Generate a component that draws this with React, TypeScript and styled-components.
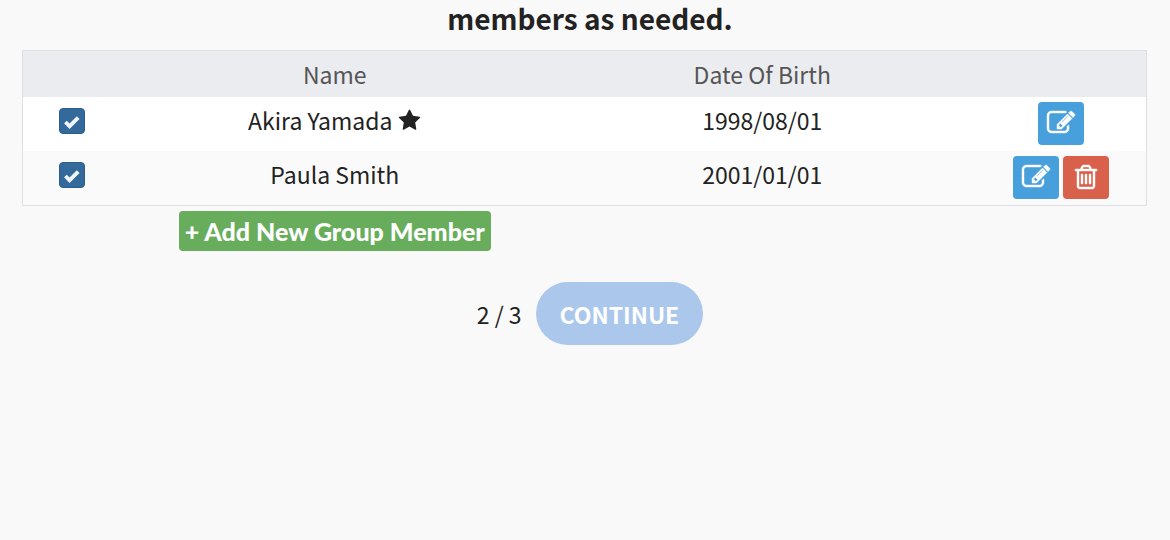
import React from 'react';
import styled, { createGlobalStyle } from 'styled-components';

const GlobalStyle = createGlobalStyle`
  *, *::before, *::after { box-sizing: border-box; }
  body {
    margin: 0;
    background: #f9f9f9;
    color: #222;
    font-family: "Noto Sans CJK JP", "Noto Sans", sans-serif;
    font-size: 23px;
    line-height: 36px;
  }
`;

const Page = styled.main`
  padding: 0 23px 0 22px;
`;

const Heading = styled.h1`
  margin: 0;
  padding: 0 0 14px 11px;
  font-size: 28px;
  line-height: 36px;
  font-weight: 700;
  text-align: center;
`;

const MemberTable = styled.table`
  width: 100%;
  table-layout: fixed;
  border-collapse: separate;
  border-spacing: 0;
  border: 1px solid #dddfe0;
  text-align: center;
`;

const HeadCell = styled.th<{ $width?: number }>`
  width: ${({ $width }) => ($width ? `${$width}px` : 'auto')};
  height: 46px;
  padding: 0;
  background: #ebecf0;
  color: #555;
  font-weight: 400;
`;

const Row = styled.tr`
  background: #fff;
  &:nth-child(even) { background: #fafafa; }
`;

const Cell = styled.td`
  height: 54px;
  padding: 5px 0 0;
  vertical-align: top;
`;

const Tick = styled.span`
  position: relative;
  display: inline-block;
  width: 26px;
  height: 26px;
  margin-top: 6px;
  vertical-align: top;

  svg {
    position: absolute;
    inset: 0;
    pointer-events: none;
  }
`;

const TickBox = styled.input`
  appearance: none;
  display: block;
  width: 26px;
  height: 26px;
  margin: 0;
  border: 1px solid #2a5c8c;
  border-radius: 4px;
  background: #34699c;
  cursor: pointer;
`;

const Actions = styled.div`
  display: flex;
  justify-content: center;
  gap: 4px;
`;

const IconButton = styled.button<{ $color: string }>`
  display: flex;
  align-items: flex-start;
  justify-content: center;
  width: 46px;
  height: 43px;
  padding: 7px 0 0;
  border: 0;
  border-radius: 4px;
  background: ${({ $color }) => $color};
  color: #fff;
  cursor: pointer;
`;

const StarIcon = styled.svg`
  margin-left: 6px;
  vertical-align: -2px;
`;

const AddRow = styled.div`
  display: grid;
  grid-template-columns: 99px 1fr 1fr 171px;
  padding-top: 5px;
`;

const AddButton = styled.button`
  grid-column: 2;
  justify-self: center;
  height: 40px;
  padding: 0 6px;
  border: 0;
  border-radius: 4px;
  background: #68ad5c;
  color: #fff;
  font-family: Lato, sans-serif;
  font-size: 25px;
  font-weight: 900;
  white-space: nowrap;
  cursor: pointer;
`;

const Footer = styled.footer`
  display: flex;
  align-items: center;
  justify-content: center;
  gap: 14px;
  padding: 31px 0 31px 11px;
`;

const ContinueButton = styled.button`
  height: 63px;
  padding: 0 24px;
  border: 0;
  border-radius: 32px;
  background: #abc8ec;
  color: #fff;
  font: inherit;
  font-weight: 700;
`;

const IconSvg = styled.svg`
  width: 28px;
  height: 28px;
  fill: currentColor;
  stroke: currentColor;
  stroke-width: 28px;
  overflow: visible;
`;

const EditIcon = () => (
  <IconSvg viewBox="0 0 1792 1792" aria-hidden="true">
    <path d="M888 1184l116-116-152-152-116 116v56h96v96h56zm440-720q-16-16-33 1l-350 350q-17 17-1 33t33-1l350-350q17-17 1-33zm80 594v190q0 119-84.5 203.5t-203.5 84.5h-832q-119 0-203.5-84.5t-84.5-203.5v-832q0-119 84.5-203.5t203.5-84.5h832q63 0 117 25 15 7 18 23 3 17-9 29l-49 49q-14 14-32 8-23-6-45-6h-832q-66 0-113 47t-47 113v832q0 66 47 113t113 47h832q66 0 113-47t47-113v-126q0-13 9-22l64-64q15-15 35-7t20 29zm-96-738l288 288-672 672h-288v-288zm444 132l-92 92-288-288 92-92q28-28 68-28t68 28l152 152q28 28 28 68t-28 68z" />
  </IconSvg>
);

const TrashIcon = () => (
  <IconSvg viewBox="0 0 1792 1792" aria-hidden="true">
    <path d="M704 736v576q0 14-9 23t-23 9h-64q-14 0-23-9t-9-23v-576q0-14 9-23t23-9h64q14 0 23 9t9 23zm256 0v576q0 14-9 23t-23 9h-64q-14 0-23-9t-9-23v-576q0-14 9-23t23-9h64q14 0 23 9t9 23zm256 0v576q0 14-9 23t-23 9h-64q-14 0-23-9t-9-23v-576q0-14 9-23t23-9h64q14 0 23 9t9 23zm128 724v-948h-896v948q0 22 7 40.5t14.5 27 10.5 8.5h832q3 0 10.5-8.5t14.5-27 7-40.5zm-672-1076h448l-48-117q-7-9-17-11h-317q-10 2-17 11zm928 32v64q0 14-9 23t-23 9h-96v948q0 83-47 143.5t-113 60.5h-832q-66 0-113-58.5t-47-141.5v-952h-96q-14 0-23-9t-9-23v-64q0-14 9-23t23-9h309l70-167q15-37 54-63t79-26h320q40 0 79 26t54 63l70 167h309q14 0 23 9t9 23z" />
  </IconSvg>
);

const Star = () => (
  <StarIcon width="23" height="23" viewBox="0 0 1792 1792" fill="currentColor" role="img" aria-label="Leader">
    <path d="M1728 647q0 22-26 48l-363 354 86 500q1 7 1 20 0 21-10.5 35.5t-30.5 14.5q-19 0-40-12l-449-236-449 236q-22 12-40 12-21 0-31.5-14.5t-10.5-35.5q0-6 2-20l86-500-364-354q-25-27-25-48 0-37 56-46l502-73 225-455q19-41 49-41t49 41l225 455 502 73q56 9 56 46z" />
  </StarIcon>
);

const CheckMark = () => (
  <svg width="26" height="26" viewBox="0 0 26 26" fill="none" stroke="#f2f6fa" strokeWidth="3.8" aria-hidden="true">
    <path d="M6.4 14l4.2 4.2 8.6-8.6" />
  </svg>
);

const members = [
  { name: 'Akira Yamada', birth: '1998/08/01', leader: true },
  { name: 'Paula Smith', birth: '2001/01/01', leader: false },
];

export default function App() {
  return (
    <>
      <GlobalStyle />
      <Page>
        <Heading>members as needed.</Heading>
        <MemberTable>
          <thead>
            <tr>
              <HeadCell $width={98} />
              <HeadCell scope="col">Name</HeadCell>
              <HeadCell scope="col">Date Of Birth</HeadCell>
              <HeadCell $width={170} />
            </tr>
          </thead>
          <tbody>
            {members.map(({ name, birth, leader }) => (
              <Row key={name}>
                <Cell>
                  <Tick>
                    <TickBox type="checkbox" defaultChecked aria-label={name} />
                    <CheckMark />
                  </Tick>
                </Cell>
                <Cell>
                  {name}
                  {leader && <Star />}
                </Cell>
                <Cell>{birth}</Cell>
                <Cell>
                  <Actions>
                    <IconButton $color="#479fdc" type="button" aria-label={`Edit ${name}`}>
                      <EditIcon />
                    </IconButton>
                    {!leader && (
                      <IconButton $color="#d9604a" type="button" aria-label={`Delete ${name}`}>
                        <TrashIcon />
                      </IconButton>
                    )}
                  </Actions>
                </Cell>
              </Row>
            ))}
          </tbody>
        </MemberTable>
        <AddRow>
          <AddButton type="button">+ Add New Group Member</AddButton>
        </AddRow>
        <Footer>
          <span>2 / 3</span>
          <ContinueButton type="button" disabled>CONTINUE</ContinueButton>
        </Footer>
      </Page>
    </>
  );
}
